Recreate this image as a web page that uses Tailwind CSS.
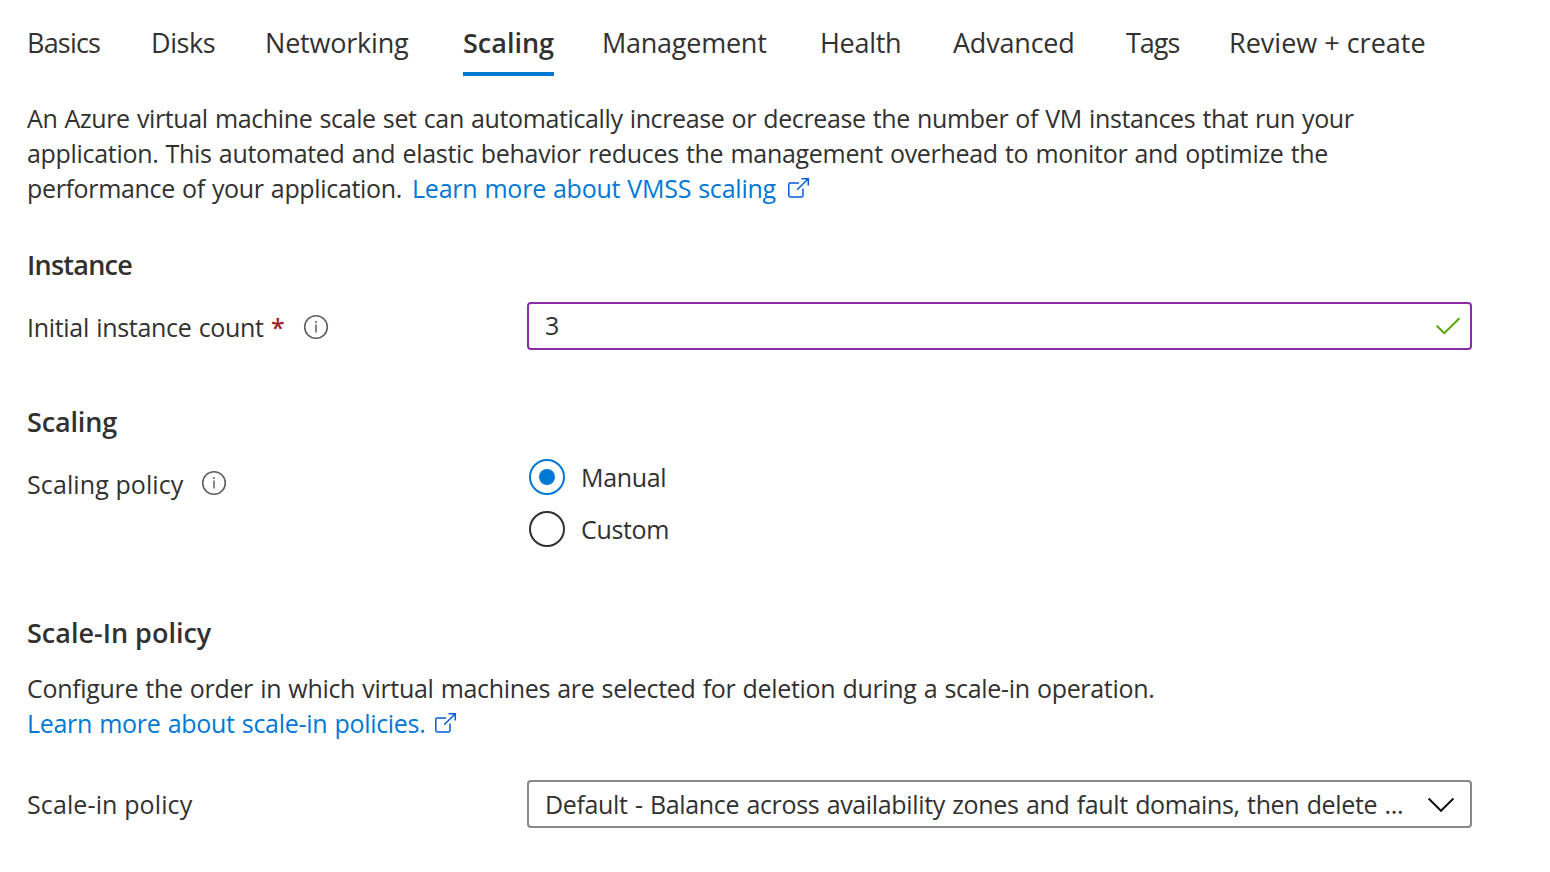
<!DOCTYPE html>
<html lang="en">
<head>
<meta charset="utf-8">
<title>Create a virtual machine scale set</title>
<script src="https://cdn.jsdelivr.net/npm/@tailwindcss/browser@4"></script>
</head>
<body class="bg-white text-[#323130] font-['Open_Sans','Noto_Sans',sans-serif] text-[25px] whitespace-nowrap overflow-hidden">
<nav class="flex pt-[22px] pl-[27px] h-[76px] text-[27px] leading-[40px]">
  <a class="w-[124px] shrink-0 pt-px tracking-[-0.8px]">Basics</a>
  <a class="w-[114px] shrink-0 pt-px tracking-[-0.4px]">Disks</a>
  <a class="w-[198px] shrink-0 pt-px tracking-[-0.2px]">Networking</a>
  <a class="w-[91px] mr-[48px] shrink-0 pt-px font-semibold border-b-4 border-[#0078d4]">Scaling</a>
  <a class="w-[218px] shrink-0 pt-px tracking-[-0.25px]">Management</a>
  <a class="w-[133px] shrink-0 pt-px tracking-[-0.3px]">Health</a>
  <a class="w-[173px] shrink-0 pt-px tracking-[-0.2px]">Advanced</a>
  <a class="w-[103px] shrink-0 pt-px tracking-[-1px]">Tags</a>
  <a class="shrink-0 pt-px">Review + create</a>
</nav>
<main class="pl-[27px]">
  <div class="mt-[25px] leading-[35px]">
    <p class="tracking-[-0.37px] [word-spacing:1px]">An Azure virtual machine scale set can automatically increase or decrease the number of VM instances that run your</p>
    <p class="tracking-[-0.31px] [word-spacing:1px]">application. This automated and elastic behavior reduces the management overhead to monitor and optimize the</p>
    <div class="flex h-[35px]">
      <span class="w-[385px] tracking-[-0.34px] [word-spacing:1px]">performance of your application.</span>
      <a class="w-[375px] text-[#0078d4] tracking-[-0.22px] [word-spacing:0.7px]">Learn more about VMSS scaling</a>
      <svg class="mt-[6px] w-6 h-6" viewBox="0 0 24 24" fill="none" stroke="#015cda" stroke-width="1.5"><path d="M12 6H3.2Q1.8 6 1.8 7.4V18.6Q1.8 20 3.2 20H14.6Q16 20 16 18.6V11.5M10.2 12.8L21 2M14.5 1.8H21.3V8.6"/></svg>
    </div>
  </div>

  <h2 class="mt-[41px] text-[27px] leading-[36px] font-semibold tracking-[-0.75px]">Instance</h2>
  <div class="mt-[19px] flex h-12">
    <div class="w-[500px] shrink-0 flex pt-px leading-[48px]">
      <span class="w-[244px] tracking-[-0.3px] [word-spacing:1px]">Initial instance count</span>
      <span class="w-[32px] font-semibold text-[#a4262c]">*</span>
      <svg class="mt-[11px] w-[26px] h-[26px]" viewBox="0 0 26 26" fill="none" stroke="#605e5c"><circle cx="13" cy="13" r="11.3" stroke-width="1.6"/><path d="M13 10.6V18.5" stroke-width="1.5"/><circle cx="13" cy="8" r="1" fill="#605e5c" stroke="none"/></svg>
    </div>
    <div class="w-[945px] h-12 border-2 border-[#8a2da5] rounded-[4px] flex justify-between pl-[16px] pr-[9px]">
      <span class="leading-[42px]">3</span>
      <svg class="mt-[9px] w-[26px] h-[26px]" viewBox="0 0 26 26" fill="none" stroke="#57a300" stroke-width="2"><path d="M1.6 12.6L9.3 20.2L24.4 5.2"/></svg>
    </div>
  </div>

  <h2 class="mt-[54px] text-[27px] leading-[36px] font-semibold tracking-[-0.15px]">Scaling</h2>
  <div class="mt-[19px] flex h-[88px]">
    <div class="w-[502px] shrink-0 flex leading-[36px]">
      <span class="mt-[7px] w-[174px] tracking-[0.1px]">Scaling policy</span>
      <svg class="mt-[11px] w-[26px] h-[26px]" viewBox="0 0 26 26" fill="none" stroke="#605e5c"><circle cx="13" cy="13" r="11.3" stroke-width="1.6"/><path d="M13 10.6V18.5" stroke-width="1.5"/><circle cx="13" cy="8" r="1" fill="#605e5c" stroke="none"/></svg>
    </div>
    <div class="flex flex-col gap-4 leading-[36px]">
      <label class="flex h-9 gap-4 tracking-[-0.35px]"><span class="w-9 h-9 rounded-full border-2 border-[#0078d4] flex items-center justify-center"><span class="w-4 h-4 rounded-full bg-[#0078d4]"></span></span>Manual</label>
      <label class="flex h-9 gap-4 tracking-[-0.35px]"><span class="w-9 h-9 rounded-full border-2 border-[#323130]"></span>Custom</label>
    </div>
  </div>

  <h2 class="mt-[68px] text-[27px] leading-[36px] font-semibold">Scale-In policy</h2>
  <div class="mt-[20px] leading-[35px]">
    <p class="tracking-[-0.32px] [word-spacing:1px]">Configure the order in which virtual machines are selected for deletion during a scale-in operation.</p>
    <div class="flex h-[35px]">
      <a class="w-[407px] text-[#0078d4] tracking-[-0.3px] [word-spacing:1px]">Learn more about scale-in policies.</a>
      <svg class="mt-[6px] w-6 h-6" viewBox="0 0 24 24" fill="none" stroke="#015cda" stroke-width="1.5"><path d="M12 6H3.2Q1.8 6 1.8 7.4V18.6Q1.8 20 3.2 20H14.6Q16 20 16 18.6V11.5M10.2 12.8L21 2M14.5 1.8H21.3V8.6"/></svg>
    </div>
  </div>
  <div class="mt-[39px] flex h-12">
    <div class="w-[500px] shrink-0 leading-[48px] tracking-[0.12px]">Scale-in policy</div>
    <div class="w-[945px] h-12 border-2 border-[#8a8886] rounded-[4px] flex justify-between pl-[16px] pr-[14px]">
      <span class="leading-[44px] tracking-[-0.35px] [word-spacing:1.2px]">Default - Balance across availability zones and fault domains, then delete ...</span>
      <svg class="mt-[9px] w-[30px] h-[26px]" viewBox="0 0 30 26" fill="none" stroke="#111" stroke-width="2"><path d="M2.6 7.5L15 19.8L27.4 7.5"/></svg>
    </div>
  </div>
</main>
</body>
</html>
